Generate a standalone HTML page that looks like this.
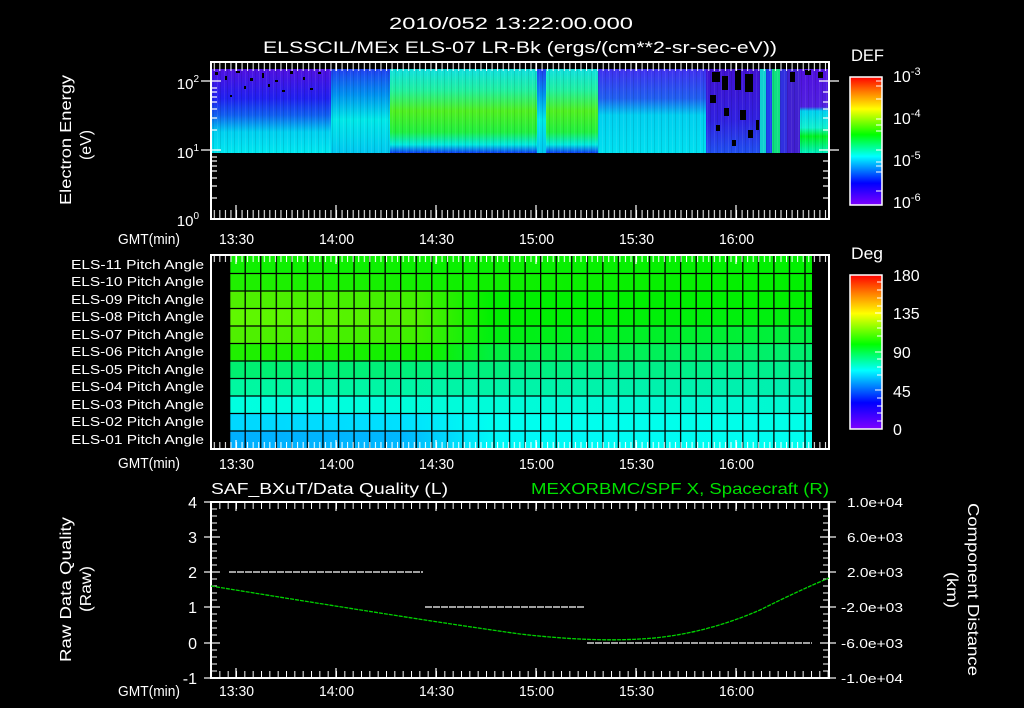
<!DOCTYPE html>
<html><head><meta charset="utf-8"><style>
html,body{margin:0;padding:0;background:#000;width:1024px;height:708px;overflow:hidden}
svg text{font-family:"Liberation Sans",sans-serif;fill:#fff}
</style></head><body>
<svg width="1024" height="708" viewBox="0 0 1024 708" xmlns="http://www.w3.org/2000/svg">
<defs>
<linearGradient id="rb" x1="0" y1="1" x2="0" y2="0">
<stop offset="0" stop-color="#7f00ff"/><stop offset="0.17" stop-color="#0000ff"/><stop offset="0.38" stop-color="#00ffff"/><stop offset="0.55" stop-color="#00ff00"/><stop offset="0.75" stop-color="#ffff00"/><stop offset="0.88" stop-color="#ff8000"/><stop offset="1" stop-color="#ff0000"/>
</linearGradient>
<linearGradient id="c1" x1="0" y1="0" x2="0" y2="1"><stop offset="0" stop-color="#5010e0"/><stop offset="0.35" stop-color="#2020f0"/><stop offset="0.55" stop-color="#1060f0"/><stop offset="0.75" stop-color="#00d0f0"/><stop offset="1" stop-color="#00e8f0"/></linearGradient>
<linearGradient id="c2" x1="0" y1="0" x2="0" y2="1"><stop offset="0" stop-color="#2040f0"/><stop offset="0.3" stop-color="#0090f0"/><stop offset="0.6" stop-color="#00e8e8"/><stop offset="1" stop-color="#00c8f0"/></linearGradient>
<linearGradient id="c3" x1="0" y1="0" x2="0" y2="1"><stop offset="0" stop-color="#10e0e0"/><stop offset="0.25" stop-color="#20f0a0"/><stop offset="0.5" stop-color="#50f020"/><stop offset="0.75" stop-color="#20f040"/><stop offset="0.9" stop-color="#00e8e0"/><stop offset="1" stop-color="#1040f0"/></linearGradient>
<linearGradient id="c4" x1="0" y1="0" x2="0" y2="1"><stop offset="0" stop-color="#4030f0"/><stop offset="0.35" stop-color="#2060f0"/><stop offset="0.55" stop-color="#00d0f0"/><stop offset="1" stop-color="#00e0f0"/></linearGradient>
<linearGradient id="c5" x1="0" y1="0" x2="0" y2="1"><stop offset="0" stop-color="#4010d0"/><stop offset="0.6" stop-color="#3020e0"/><stop offset="1" stop-color="#2050f0"/></linearGradient>
<linearGradient id="c6" x1="0" y1="0" x2="0" y2="1"><stop offset="0" stop-color="#5010e0"/><stop offset="0.45" stop-color="#5020e0"/><stop offset="0.5" stop-color="#00d0f0"/><stop offset="0.7" stop-color="#10f0d0"/><stop offset="0.8" stop-color="#00f020"/><stop offset="1" stop-color="#00f0c0"/></linearGradient>
<pattern id="tk1" x="236" y="0" width="5.556" height="708" patternUnits="userSpaceOnUse"><rect x="0" y="0" width="1" height="708" fill="#fff"/></pattern>
<pattern id="tk2" x="236" y="0" width="8.333" height="708" patternUnits="userSpaceOnUse"><rect x="0" y="0" width="1" height="708" fill="#fff"/></pattern>
<pattern id="streak" x="0" y="0" width="7" height="708" patternUnits="userSpaceOnUse"><rect x="0" y="0" width="1" height="708" fill="#fff" opacity="0.08"/><rect x="3" y="0" width="1" height="708" fill="#000" opacity="0.1"/></pattern>
</defs>

<text x="389" y="29" font-size="17" textLength="244" lengthAdjust="spacingAndGlyphs">2010/052 13:22:00.000</text>
<text x="263" y="53" font-size="17" textLength="514" lengthAdjust="spacingAndGlyphs">ELSSCIL/MEx ELS-07 LR-Bk  (ergs/(cm**2-sr-sec-eV))</text>

<rect x="211" y="69" width="618" height="84" fill="#000"/>
<rect x="211" y="69" width="120" height="84" fill="url(#c1)"/>
<rect x="331" y="69" width="59" height="84" fill="url(#c2)"/>
<rect x="390" y="69" width="147" height="84" fill="url(#c3)"/>
<rect x="537" y="69" width="9" height="84" fill="url(#c2)"/>
<rect x="546" y="69" width="52" height="84" fill="url(#c3)"/>
<rect x="598" y="69" width="108" height="84" fill="url(#c4)"/>
<rect x="706" y="69" width="54" height="84" fill="url(#c5)"/>
<rect x="760" y="69" width="6" height="84" fill="#10d0d0"/>
<rect x="766" y="69" width="6" height="84" fill="#2040f0"/>
<rect x="772" y="69" width="8" height="84" fill="#10e080"/>
<rect x="780" y="69" width="7" height="84" fill="#3030e0"/>
<rect x="787" y="69" width="13" height="84" fill="#4020d0"/>
<rect x="800" y="69" width="29" height="84" fill="url(#c6)"/>
<rect x="211" y="69" width="618" height="84" fill="url(#streak)"/>
<g fill="#000">
<rect x="215" y="72" width="3" height="3"/><rect x="225" y="76" width="2" height="4"/><rect x="236" y="71" width="4" height="2"/><rect x="250" y="78" width="3" height="3"/><rect x="262" y="73" width="2" height="5"/><rect x="275" y="80" width="3" height="2"/><rect x="290" y="71" width="3" height="3"/><rect x="303" y="77" width="2" height="3"/><rect x="318" y="72" width="3" height="2"/><rect x="244" y="86" width="2" height="3"/><rect x="282" y="90" width="3" height="2"/><rect x="230" y="95" width="2" height="2"/><rect x="268" y="84" width="2" height="3"/><rect x="310" y="88" width="3" height="2"/>
<rect x="712" y="72" width="8" height="10"/><rect x="722" y="76" width="6" height="14"/><rect x="735" y="70" width="6" height="20"/><rect x="745" y="74" width="8" height="18"/><rect x="710" y="95" width="6" height="8"/><rect x="724" y="108" width="5" height="8"/><rect x="740" y="110" width="6" height="10"/><rect x="716" y="125" width="4" height="6"/><rect x="748" y="130" width="5" height="8"/><rect x="732" y="140" width="4" height="6"/><rect x="756" y="120" width="3" height="10"/><rect x="790" y="72" width="5" height="10"/><rect x="805" y="70" width="6" height="5"/><rect x="818" y="72" width="5" height="6"/>
</g>
<rect x="211" y="62" width="618" height="157" fill="none" stroke="#fff" stroke-width="2"/>
<rect x="212" y="63" width="616" height="8" fill="url(#tk1)"/>
<rect x="212" y="210" width="616" height="8" fill="url(#tk1)"/>
<g stroke="#fff" stroke-width="1.2">
<line x1="236" y1="63" x2="236" y2="71"/><line x1="336" y1="63" x2="336" y2="71"/><line x1="436" y1="63" x2="436" y2="71"/><line x1="536" y1="63" x2="536" y2="71"/><line x1="636" y1="63" x2="636" y2="71"/><line x1="736" y1="63" x2="736" y2="71"/>
<line x1="236" y1="205" x2="236" y2="218"/><line x1="336" y1="205" x2="336" y2="218"/><line x1="436" y1="205" x2="436" y2="218"/><line x1="536" y1="205" x2="536" y2="218"/><line x1="636" y1="205" x2="636" y2="218"/><line x1="736" y1="205" x2="736" y2="218"/>
<line x1="201" y1="81" x2="221" y2="81"/><line x1="201" y1="150" x2="221" y2="150"/>
<line x1="819" y1="81" x2="839" y2="81"/><line x1="819" y1="150" x2="839" y2="150"/>
<line x1="211" y1="130" x2="217" y2="130"/><line x1="211" y1="118" x2="217" y2="118"/><line x1="211" y1="109" x2="217" y2="109"/><line x1="211" y1="102" x2="217" y2="102"/><line x1="211" y1="97" x2="217" y2="97"/><line x1="211" y1="92" x2="217" y2="92"/><line x1="211" y1="88" x2="217" y2="88"/>
<line x1="211" y1="198" x2="217" y2="198"/><line x1="211" y1="186" x2="217" y2="186"/><line x1="211" y1="178" x2="217" y2="178"/><line x1="211" y1="171" x2="217" y2="171"/><line x1="211" y1="166" x2="217" y2="166"/><line x1="211" y1="161" x2="217" y2="161"/><line x1="211" y1="157" x2="217" y2="157"/>
<line x1="823" y1="130" x2="829" y2="130"/><line x1="823" y1="118" x2="829" y2="118"/><line x1="823" y1="109" x2="829" y2="109"/><line x1="823" y1="102" x2="829" y2="102"/><line x1="823" y1="92" x2="829" y2="92"/>
<line x1="823" y1="198" x2="829" y2="198"/><line x1="823" y1="186" x2="829" y2="186"/><line x1="823" y1="178" x2="829" y2="178"/><line x1="823" y1="171" x2="829" y2="171"/><line x1="823" y1="161" x2="829" y2="161"/>
</g>
<g font-size="15" text-anchor="end">
<text x="199" y="89">10<tspan font-size="10" dy="-7">2</tspan></text>
<text x="199" y="158">10<tspan font-size="10" dy="-7">1</tspan></text>
<text x="199" y="226">10<tspan font-size="10" dy="-7">0</tspan></text>
</g>
<text transform="translate(71,205) rotate(-90)" font-size="16" textLength="130" lengthAdjust="spacingAndGlyphs">Electron Energy</text>
<text transform="translate(91,160) rotate(-90)" font-size="16" textLength="30" lengthAdjust="spacingAndGlyphs">(eV)</text>
<g font-size="15">
<text x="118" y="244" textLength="62" lengthAdjust="spacingAndGlyphs">GMT(min)</text>
<text x="219" y="244" textLength="35" lengthAdjust="spacingAndGlyphs">13:30</text><text x="319" y="244" textLength="35" lengthAdjust="spacingAndGlyphs">14:00</text><text x="419" y="244" textLength="35" lengthAdjust="spacingAndGlyphs">14:30</text><text x="519" y="244" textLength="35" lengthAdjust="spacingAndGlyphs">15:00</text><text x="619" y="244" textLength="35" lengthAdjust="spacingAndGlyphs">15:30</text><text x="719" y="244" textLength="35" lengthAdjust="spacingAndGlyphs">16:00</text>
</g>
<text x="851" y="61" font-size="17" textLength="33" lengthAdjust="spacingAndGlyphs">DEF</text>
<rect x="850" y="77" width="32" height="128" fill="url(#rb)" stroke="#fff" stroke-width="1.5"/>
<path d="M876 81h6M876 86h6M876 99h6M876 119h6M876 125h6M876 131h6M876 150h6M876 162h6M876 166h6M876 172h6M876 191h6" stroke="#fff" stroke-width="1"/>
<g font-size="16"><text x="893" y="82">10<tspan font-size="11" dy="-7">-3</tspan></text><text x="893" y="124">10<tspan font-size="11" dy="-7">-4</tspan></text><text x="893" y="166">10<tspan font-size="11" dy="-7">-5</tspan></text><text x="893" y="208">10<tspan font-size="11" dy="-7">-6</tspan></text></g>

<g>
<defs>
<linearGradient id="r1" x1="0" x2="1"><stop offset="0" stop-color="#00b0ff"/><stop offset="0.3" stop-color="#00b8ff"/><stop offset="0.45" stop-color="#00f8f8"/><stop offset="1" stop-color="#00fff0"/></linearGradient>
<linearGradient id="r2" x1="0" x2="1"><stop offset="0" stop-color="#00d8ff"/><stop offset="0.3" stop-color="#00e0ff"/><stop offset="0.45" stop-color="#00fff0"/><stop offset="1" stop-color="#00ffe8"/></linearGradient>
<linearGradient id="r3" x1="0" x2="1"><stop offset="0" stop-color="#00ffe0"/><stop offset="1" stop-color="#00f8d0"/></linearGradient>
<linearGradient id="r4" x1="0" x2="1"><stop offset="0" stop-color="#00f8a0"/><stop offset="1" stop-color="#00f0b0"/></linearGradient>
<linearGradient id="r5" x1="0" x2="1"><stop offset="0" stop-color="#00f070"/><stop offset="1" stop-color="#00f090"/></linearGradient>
<linearGradient id="r6" x1="0" x2="1"><stop offset="0" stop-color="#20f000"/><stop offset="0.35" stop-color="#10f000"/><stop offset="0.45" stop-color="#00f040"/><stop offset="1" stop-color="#00f070"/></linearGradient>
<linearGradient id="r7" x1="0" x2="1"><stop offset="0" stop-color="#50f000"/><stop offset="0.33" stop-color="#40f000"/><stop offset="0.45" stop-color="#00f010"/><stop offset="1" stop-color="#00f040"/></linearGradient>
<linearGradient id="r8" x1="0" x2="1"><stop offset="0" stop-color="#60f800"/><stop offset="0.33" stop-color="#50f000"/><stop offset="0.45" stop-color="#00f000"/><stop offset="1" stop-color="#00f010"/></linearGradient>
<linearGradient id="r9" x1="0" x2="1"><stop offset="0" stop-color="#50f000"/><stop offset="0.33" stop-color="#40f000"/><stop offset="0.45" stop-color="#00f000"/><stop offset="1" stop-color="#00f000"/></linearGradient>
<linearGradient id="r10" x1="0" x2="1"><stop offset="0" stop-color="#20f000"/><stop offset="0.4" stop-color="#10f000"/><stop offset="1" stop-color="#00f000"/></linearGradient>
<linearGradient id="r11" x1="0" x2="1"><stop offset="0" stop-color="#10f000"/><stop offset="1" stop-color="#00f000"/></linearGradient>
<pattern id="gv" x="229" y="0" width="15.55" height="708" patternUnits="userSpaceOnUse"><rect x="0" y="0" width="1.3" height="708" fill="#000"/></pattern>
</defs>
<rect x="229" y="256" width="583" height="17.5" fill="url(#r11)"/>
<rect x="229" y="273.5" width="583" height="17.5" fill="url(#r10)"/>
<rect x="229" y="291" width="583" height="17.5" fill="url(#r9)"/>
<rect x="229" y="308.5" width="583" height="17.5" fill="url(#r8)"/>
<rect x="229" y="326" width="583" height="17.5" fill="url(#r7)"/>
<rect x="229" y="343.5" width="583" height="17.5" fill="url(#r6)"/>
<rect x="229" y="361" width="583" height="17.5" fill="url(#r5)"/>
<rect x="229" y="378.5" width="583" height="17.5" fill="url(#r4)"/>
<rect x="229" y="396" width="583" height="17.5" fill="url(#r3)"/>
<rect x="229" y="413.5" width="583" height="17.5" fill="url(#r2)"/>
<rect x="229" y="431" width="583" height="18" fill="url(#r1)"/>
<rect x="229" y="256" width="583" height="193" fill="url(#gv)"/>
<g stroke="#000" stroke-width="1.3">
<line x1="229" y1="273.5" x2="812" y2="273.5"/><line x1="229" y1="291" x2="812" y2="291"/><line x1="229" y1="308.5" x2="812" y2="308.5"/><line x1="229" y1="326" x2="812" y2="326"/><line x1="229" y1="343.5" x2="812" y2="343.5"/><line x1="229" y1="361" x2="812" y2="361"/><line x1="229" y1="378.5" x2="812" y2="378.5"/><line x1="229" y1="396" x2="812" y2="396"/><line x1="229" y1="413.5" x2="812" y2="413.5"/><line x1="229" y1="431" x2="812" y2="431"/>
</g>
<rect x="211" y="255" width="618" height="194" fill="none" stroke="#fff" stroke-width="2"/>
<rect x="212" y="256" width="616" height="6" fill="url(#tk1)"/>
<rect x="212" y="442" width="616" height="6" fill="url(#tk1)"/>
<g stroke="#fff" stroke-width="1.2">
<line x1="236" y1="256" x2="236" y2="264"/><line x1="336" y1="256" x2="336" y2="264"/><line x1="436" y1="256" x2="436" y2="264"/><line x1="536" y1="256" x2="536" y2="264"/><line x1="636" y1="256" x2="636" y2="264"/><line x1="736" y1="256" x2="736" y2="264"/>
<line x1="236" y1="440" x2="236" y2="448"/><line x1="336" y1="440" x2="336" y2="448"/><line x1="436" y1="440" x2="436" y2="448"/><line x1="536" y1="440" x2="536" y2="448"/><line x1="636" y1="440" x2="636" y2="448"/><line x1="736" y1="440" x2="736" y2="448"/>
</g>
<g font-size="13">
<text x="71" y="269" textLength="133" lengthAdjust="spacingAndGlyphs">ELS-11 Pitch Angle</text><text x="71" y="286" textLength="133" lengthAdjust="spacingAndGlyphs">ELS-10 Pitch Angle</text><text x="71" y="304" textLength="133" lengthAdjust="spacingAndGlyphs">ELS-09 Pitch Angle</text><text x="71" y="321" textLength="133" lengthAdjust="spacingAndGlyphs">ELS-08 Pitch Angle</text><text x="71" y="339" textLength="133" lengthAdjust="spacingAndGlyphs">ELS-07 Pitch Angle</text><text x="71" y="356" textLength="133" lengthAdjust="spacingAndGlyphs">ELS-06 Pitch Angle</text><text x="71" y="374" textLength="133" lengthAdjust="spacingAndGlyphs">ELS-05 Pitch Angle</text><text x="71" y="391" textLength="133" lengthAdjust="spacingAndGlyphs">ELS-04 Pitch Angle</text><text x="71" y="409" textLength="133" lengthAdjust="spacingAndGlyphs">ELS-03 Pitch Angle</text><text x="71" y="426" textLength="133" lengthAdjust="spacingAndGlyphs">ELS-02 Pitch Angle</text><text x="71" y="444" textLength="133" lengthAdjust="spacingAndGlyphs">ELS-01 Pitch Angle</text>
</g>
<g font-size="15">
<text x="118" y="468" textLength="62" lengthAdjust="spacingAndGlyphs">GMT(min)</text>
<text x="219" y="469" textLength="35" lengthAdjust="spacingAndGlyphs">13:30</text><text x="319" y="469" textLength="35" lengthAdjust="spacingAndGlyphs">14:00</text><text x="419" y="469" textLength="35" lengthAdjust="spacingAndGlyphs">14:30</text><text x="519" y="469" textLength="35" lengthAdjust="spacingAndGlyphs">15:00</text><text x="619" y="469" textLength="35" lengthAdjust="spacingAndGlyphs">15:30</text><text x="719" y="469" textLength="35" lengthAdjust="spacingAndGlyphs">16:00</text>
</g>
<text x="851" y="259" font-size="17" textLength="32" lengthAdjust="spacingAndGlyphs">Deg</text>
<rect x="850" y="275" width="32" height="154" fill="url(#rb)" stroke="#fff" stroke-width="1.5"/>
<path d="M877 282h5M877 290h5M877 298h5M877 306h5M875 313h7M877 321h5M877 328h5M877 336h5M875 352h7M877 359h5M877 367h5M877 375h5M875 390h7M877 398h5M877 406h5M877 413h5M877 421h5" stroke="#fff" stroke-width="1"/>
<g font-size="16"><text x="893" y="281">180</text><text x="893" y="319">135</text><text x="893" y="358">90</text><text x="893" y="397">45</text><text x="893" y="435">0</text></g>
</g>

<text x="211" y="494" font-size="16" textLength="237" lengthAdjust="spacingAndGlyphs">SAF_BXuT/Data Quality (L)</text>
<text x="531" y="494" font-size="16" textLength="298" lengthAdjust="spacingAndGlyphs" style="fill:#00e000">MEXORBMC/SPF X, Spacecraft (R)</text>
<rect x="211" y="502" width="618" height="176" fill="none" stroke="#fff" stroke-width="2"/>
<rect x="212" y="503" width="616" height="6" fill="url(#tk2)"/>
<rect x="212" y="671" width="616" height="6" fill="url(#tk2)"/>
<g stroke="#fff" stroke-width="1.2">
<line x1="236" y1="503" x2="236" y2="511"/><line x1="336" y1="503" x2="336" y2="511"/><line x1="436" y1="503" x2="436" y2="511"/><line x1="536" y1="503" x2="536" y2="511"/><line x1="636" y1="503" x2="636" y2="511"/><line x1="736" y1="503" x2="736" y2="511"/>
<line x1="236" y1="668" x2="236" y2="677"/><line x1="336" y1="668" x2="336" y2="677"/><line x1="436" y1="668" x2="436" y2="677"/><line x1="536" y1="668" x2="536" y2="677"/><line x1="636" y1="668" x2="636" y2="677"/><line x1="736" y1="668" x2="736" y2="677"/>
<line x1="204" y1="502" x2="220" y2="502"/><line x1="204" y1="537" x2="220" y2="537"/><line x1="204" y1="572" x2="220" y2="572"/><line x1="204" y1="607" x2="220" y2="607"/><line x1="204" y1="643" x2="220" y2="643"/><line x1="204" y1="678" x2="220" y2="678"/>
<line x1="820" y1="502" x2="836" y2="502"/><line x1="820" y1="537" x2="836" y2="537"/><line x1="820" y1="572" x2="836" y2="572"/><line x1="820" y1="607" x2="836" y2="607"/><line x1="820" y1="643" x2="836" y2="643"/><line x1="820" y1="678" x2="836" y2="678"/>
</g>
<path d="M211 509h6M211 516h6M211 523h6M211 530h6M211 544h6M211 551h6M211 558h6M211 565h6M211 579h6M211 586h6M211 593h6M211 600h6M211 614h6M211 621h6M211 628h6M211 635h6M211 650h6M211 657h6M211 664h6M211 671h6M823 509h6M823 516h6M823 523h6M823 530h6M823 544h6M823 551h6M823 558h6M823 565h6M823 579h6M823 586h6M823 593h6M823 600h6M823 614h6M823 621h6M823 628h6M823 635h6M823 650h6M823 657h6M823 664h6M823 671h6" stroke="#fff" stroke-width="1"/>
<line x1="229" y1="572" x2="423" y2="572" stroke="#fff" stroke-width="1.2" stroke-dasharray="7 1"/>
<line x1="425" y1="607" x2="585" y2="607" stroke="#fff" stroke-width="1.2" stroke-dasharray="7 1"/>
<line x1="587" y1="643" x2="812" y2="643" stroke="#fff" stroke-width="1.2" stroke-dasharray="7 1"/>
<path d="M211 586 Q 420 620 520 634 Q 590 642 640 639 Q 700 636 760 610 Q 800 590 829 578" fill="none" stroke="#00d000" stroke-width="1.3" stroke-dasharray="4 1"/>
<g font-size="16" text-anchor="end">
<text x="197" y="508">4</text><text x="197" y="543">3</text><text x="197" y="578">2</text><text x="197" y="613">1</text><text x="197" y="649">0</text><text x="197" y="684">-1</text>
</g>
<g font-size="13">
<text x="847" y="507" textLength="56" lengthAdjust="spacingAndGlyphs">1.0e+04</text><text x="847" y="542" textLength="56" lengthAdjust="spacingAndGlyphs">6.0e+03</text><text x="847" y="577" textLength="56" lengthAdjust="spacingAndGlyphs">2.0e+03</text><text x="841" y="612" textLength="62" lengthAdjust="spacingAndGlyphs">-2.0e+03</text><text x="841" y="648" textLength="62" lengthAdjust="spacingAndGlyphs">-6.0e+03</text><text x="841" y="683" textLength="62" lengthAdjust="spacingAndGlyphs">-1.0e+04</text>
</g>
<text transform="translate(71,662) rotate(-90)" font-size="16" textLength="145" lengthAdjust="spacingAndGlyphs">Raw Data Quality</text>
<text transform="translate(91,612) rotate(-90)" font-size="16" textLength="46" lengthAdjust="spacingAndGlyphs">(Raw)</text>
<text transform="translate(968,503) rotate(90)" font-size="16" textLength="173" lengthAdjust="spacingAndGlyphs">Component Distance</text>
<text transform="translate(947,572) rotate(90)" font-size="16" textLength="36" lengthAdjust="spacingAndGlyphs">(km)</text>
<g font-size="15">
<text x="118" y="696" textLength="62" lengthAdjust="spacingAndGlyphs">GMT(min)</text>
<text x="219" y="696" textLength="35" lengthAdjust="spacingAndGlyphs">13:30</text><text x="319" y="696" textLength="35" lengthAdjust="spacingAndGlyphs">14:00</text><text x="419" y="696" textLength="35" lengthAdjust="spacingAndGlyphs">14:30</text><text x="519" y="696" textLength="35" lengthAdjust="spacingAndGlyphs">15:00</text><text x="619" y="696" textLength="35" lengthAdjust="spacingAndGlyphs">15:30</text><text x="719" y="696" textLength="35" lengthAdjust="spacingAndGlyphs">16:00</text>
</g>
</svg>
</body></html>
